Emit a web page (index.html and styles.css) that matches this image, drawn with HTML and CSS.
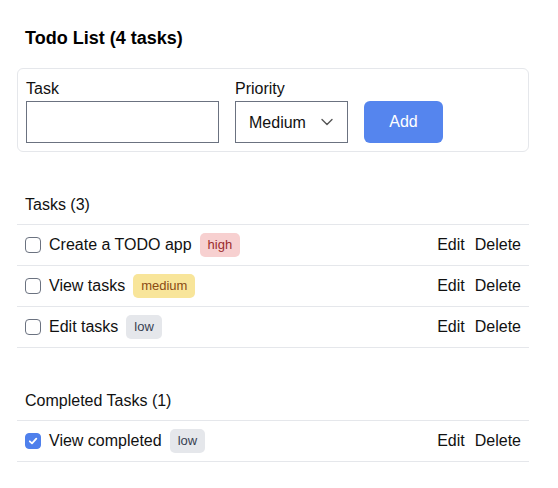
FILE: index.html
```html
<!DOCTYPE html>
<html>
<head>
<meta charset="utf-8">
<link rel="stylesheet" href="styles.css">
</head>
<body>
<div class="app">
  <h1 class="title">Todo List (4 tasks)</h1>
  <form class="card">
    <label class="field">
      <span class="label">Task</span>
      <input class="text-input" type="text">
    </label>
    <label class="field">
      <span class="label">Priority</span>
      <span class="select-wrap">
        <select class="select"><option>Low</option><option selected>Medium</option><option>High</option></select>
        <svg class="chevron" width="12" height="8" viewBox="0 0 12 8"><path d="M1 1.5 L6 6.5 L11 1.5" fill="none" stroke="#555" stroke-width="1.4" stroke-linecap="round" stroke-linejoin="round"/></svg>
      </span>
    </label>
    <button type="button" class="add-btn">Add</button>
  </form>

  <section class="section">
    <h2 class="section-title">Tasks (3)</h2>
    <ul class="list">
      <li class="row">
        <span class="check"></span>
        <span class="name">Create a TODO app</span>
        <span class="badge badge-high">high</span>
        <span class="actions"><button class="link">Edit</button><button class="link">Delete</button></span>
      </li>
      <li class="row">
        <span class="check"></span>
        <span class="name">View tasks</span>
        <span class="badge badge-medium">medium</span>
        <span class="actions"><button class="link">Edit</button><button class="link">Delete</button></span>
      </li>
      <li class="row">
        <span class="check"></span>
        <span class="name">Edit tasks</span>
        <span class="badge badge-low">low</span>
        <span class="actions"><button class="link">Edit</button><button class="link">Delete</button></span>
      </li>
    </ul>
  </section>

  <section class="section">
    <h2 class="section-title">Completed Tasks (1)</h2>
    <ul class="list">
      <li class="row">
        <span class="check checked"><svg width="12" height="12" viewBox="0 0 12 12"><path d="M2.8 6.3 L5 8.4 L9.3 3.7" fill="none" stroke="#fff" stroke-width="1.8" stroke-linecap="round" stroke-linejoin="round"/></svg></span>
        <span class="name">View completed</span>
        <span class="badge badge-low">low</span>
        <span class="actions"><button class="link">Edit</button><button class="link">Delete</button></span>
      </li>
    </ul>
  </section>
</div>
</body>
</html>
```

FILE: styles.css
```css
* { box-sizing: border-box; }
html, body { margin: 0; padding: 0; background: #fff; }
body {
  font-family: "Liberation Sans", Arial, Helvetica, sans-serif;
  color: #111;
  font-size: 16px;
}
.app {
  width: 512px;
  margin-left: 17px;
  padding-top: 28px;
}
.title {
  margin: 0;
  padding: 0 8px;
  font-size: 18px;
  font-weight: 700;
  line-height: 20px;
  color: #000;
}
.card {
  margin: 20px 0 0;
  border: 1px solid #e5e7eb;
  border-radius: 6px;
  padding: 8px;
  display: flex;
  align-items: flex-end;
  gap: 16px;
}
.field { display: flex; flex-direction: column; }
.label { line-height: 24px; font-size: 16px; color: #111; }
.text-input {
  width: 193px;
  height: 42px;
  border: 1px solid #6b7280;
  border-radius: 0;
  padding: 0 10px;
  font: inherit;
  outline: none;
}
.select-wrap { position: relative; display: block; width: 113px; height: 42px; }
.select {
  appearance: none;
  -webkit-appearance: none;
  width: 113px;
  height: 42px;
  border: 1px solid #6b7280;
  border-radius: 0;
  background: #fff;
  padding: 0 0 0 13px;
  font: inherit;
  color: #111;
}
.chevron { position: absolute; left: 86px; top: 17px; pointer-events: none; }
.add-btn {
  width: 79px;
  height: 42px;
  border: none;
  border-radius: 6px;
  background: #5585ee;
  color: #fff;
  font: inherit;
  font-size: 16px;
}
.section { margin-top: 33px; }
.section-title {
  margin: 0;
  padding: 10px 8px 9px;
  font-size: 16px;
  font-weight: 400;
  line-height: 20px;
  border-bottom: 1px solid #e5e7eb;
  color: #111;
}
.list { list-style: none; margin: 0; padding: 0; }
.row {
  height: 41px;
  border-bottom: 1px solid #e5e7eb;
  display: flex;
  align-items: center;
  padding: 0 8px;
  gap: 8px;
}
.check {
  width: 16px;
  height: 16px;
  border: 1px solid #6b7280;
  border-radius: 4px;
  flex: none;
  display: flex;
  align-items: center;
  justify-content: center;
}
.check.checked { background: #4f80ec; border-color: #4f80ec; }
.name { font-size: 16px; line-height: 20px; }
.badge {
  font-size: 13px;
  line-height: 16px;
  padding: 4px 8px;
  border-radius: 5px;
}
.badge-high { background: #f7d0d0; color: #9b2c2c; }
.badge-medium { background: #f8e59a; color: #8a4b14; }
.badge-low { background: #e5e7eb; color: #374151; }
.actions { margin-left: auto; display: flex; gap: 10px; }
.link {
  border: none;
  background: none;
  padding: 0;
  font: inherit;
  font-size: 16px;
  color: #111;
}
```
